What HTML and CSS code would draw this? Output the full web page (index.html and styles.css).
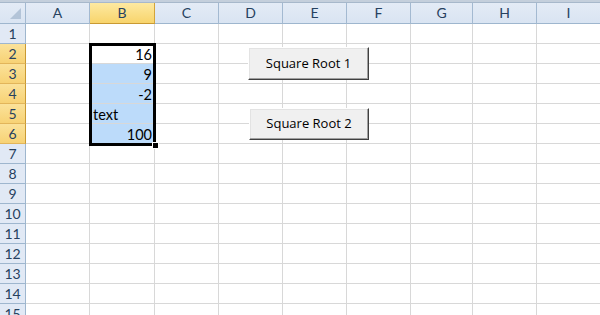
FILE: index.html
```html
<!DOCTYPE html>
<html lang="en">
<head>
    <meta charset="UTF-8">
    <title>Square Root</title>
    <link rel="stylesheet" href="styles.css">
</head>
<body>
    <div class="sheet">
        <div class="topbar"></div>

        <div class="row head">
            <div class="corner"><span class="tri"></span></div>
            <div class="col">A</div>
            <div class="col sel">B</div>
            <div class="col">C</div>
            <div class="col">D</div>
            <div class="col">E</div>
            <div class="col">F</div>
            <div class="col">G</div>
            <div class="col">H</div>
            <div class="col">I</div>
        </div>

        <div class="row"><div class="num">1</div><div></div><div></div><div></div><div></div><div></div><div></div><div></div><div></div><div></div></div>
        <div class="row"><div class="num sel">2</div><div></div><div class="r">16</div><div></div><div></div><div></div><div></div><div></div><div></div><div></div></div>
        <div class="row"><div class="num sel">3</div><div></div><div class="r hl">9</div><div></div><div></div><div></div><div></div><div></div><div></div><div></div></div>
        <div class="row"><div class="num sel">4</div><div></div><div class="r hl">-2</div><div></div><div></div><div></div><div></div><div></div><div></div><div></div></div>
        <div class="row"><div class="num sel">5</div><div></div><div class="hl">text</div><div></div><div></div><div></div><div></div><div></div><div></div><div></div></div>
        <div class="row"><div class="num sel">6</div><div></div><div class="r hl">100</div><div></div><div></div><div></div><div></div><div></div><div></div><div></div></div>
        <div class="row"><div class="num">7</div><div></div><div></div><div></div><div></div><div></div><div></div><div></div><div></div><div></div></div>
        <div class="row"><div class="num">8</div><div></div><div></div><div></div><div></div><div></div><div></div><div></div><div></div><div></div></div>
        <div class="row"><div class="num">9</div><div></div><div></div><div></div><div></div><div></div><div></div><div></div><div></div><div></div></div>
        <div class="row"><div class="num">10</div><div></div><div></div><div></div><div></div><div></div><div></div><div></div><div></div><div></div></div>
        <div class="row"><div class="num">11</div><div></div><div></div><div></div><div></div><div></div><div></div><div></div><div></div><div></div></div>
        <div class="row"><div class="num">12</div><div></div><div></div><div></div><div></div><div></div><div></div><div></div><div></div><div></div></div>
        <div class="row"><div class="num">13</div><div></div><div></div><div></div><div></div><div></div><div></div><div></div><div></div><div></div></div>
        <div class="row"><div class="num">14</div><div></div><div></div><div></div><div></div><div></div><div></div><div></div><div></div><div></div></div>
        <div class="row"><div class="num">15</div><div></div><div></div><div></div><div></div><div></div><div></div><div></div><div></div><div></div></div>

        <!-- selection frame around B2:B6 -->
        <div class="selection"><span class="handle"></span></div>

        <button class="btn btn-1">Square Root 1</button>
        <button class="btn btn-2">Square Root 2</button>
    </div>
</body>
</html>
```

FILE: styles.css
```css
body {
    margin: 0;
    background-color: #ffffff;
    font-family: Lato, "Liberation Sans", sans-serif;
    overflow: hidden;
}

.sheet {
    position: relative;
    width: 600px;
    height: 315px;
    overflow: hidden;
}

.topbar {
    height: 2px;
    background-color: #c4cfdc;
    border-bottom: 1px solid #a7b8cb;
}

.row {
    display: grid;
    grid-template-columns: 26px 64px 65px 64px 64px 64px 64px 62px 64px 64px;
    height: 20px;
}

.row > div {
    box-sizing: border-box;
    border-right: 1px solid #d8d8d8;
    border-bottom: 1px solid #d8d8d8;
    font-size: 14.5px;
    line-height: 21px;
    padding: 0 3px;
    color: #000;
    white-space: nowrap;
    overflow: hidden;
}

.row > .r {
    text-align: right;
    padding-right: 2px;
}

.row > .hl {
    background-color: #bcdbfa;
}

.head {
    height: 21px;
}

.head > div {
    background: linear-gradient(#e3ebf6, #d9e4f2);
    border-right: 1px solid #a3b9d1;
    border-bottom: 1px solid #9eb6ce;
    text-align: center;
    color: #27415f;
    font-size: 14px;
    line-height: 20px;
}

.head > .sel {
    background: linear-gradient(#fde9a1, #f8d46c);
    border-right-color: #d2a43a;
    border-bottom-color: #c99a33;
}

.corner {
    position: relative;
}

.tri {
    position: absolute;
    right: 4px;
    bottom: 4px;
    width: 0;
    height: 0;
    border-left: 11px solid transparent;
    border-bottom: 11px solid #b3c4d8;
}

.row > .num {
    background-color: #e1e9f5;
    border-right: 1px solid #9eb6ce;
    border-bottom: 1px solid #9eb6ce;
    text-align: center;
    color: #27415f;
    font-size: 14px;
    line-height: 20px;
    padding: 0;
}

.row > .num.sel {
    background: linear-gradient(#fbe29a, #f7d275);
    border-bottom-color: #e2b55a;
    border-right-color: #c99a33;
}

.selection {
    position: absolute;
    left: 89px;
    top: 43px;
    width: 61px;
    height: 97px;
    border: 3px solid #000;
}

.handle {
    position: absolute;
    right: -6px;
    bottom: -6px;
    width: 5px;
    height: 5px;
    background-color: #000;
    border: 1px solid #fff;
}

.btn {
    position: absolute;
    left: 248px;
    width: 121px;
    height: 33px;
    padding: 0 0 2px;
    background-color: #f0f0f0;
    border: 1px solid;
    border-color: #ffffff #404040 #404040 #ffffff;
    box-shadow: inset -1px -1px 0 #a0a0a0, inset 1px 1px 0 #e3e3e3;
    font-family: "Open Sans", "Noto Sans", sans-serif;
    font-size: 13px;
    color: #000;
}

.btn-1 {
    top: 47px;
}

.btn-2 {
    top: 108px;
    left: 249px;
    width: 120px;
    height: 32px;
}
```
